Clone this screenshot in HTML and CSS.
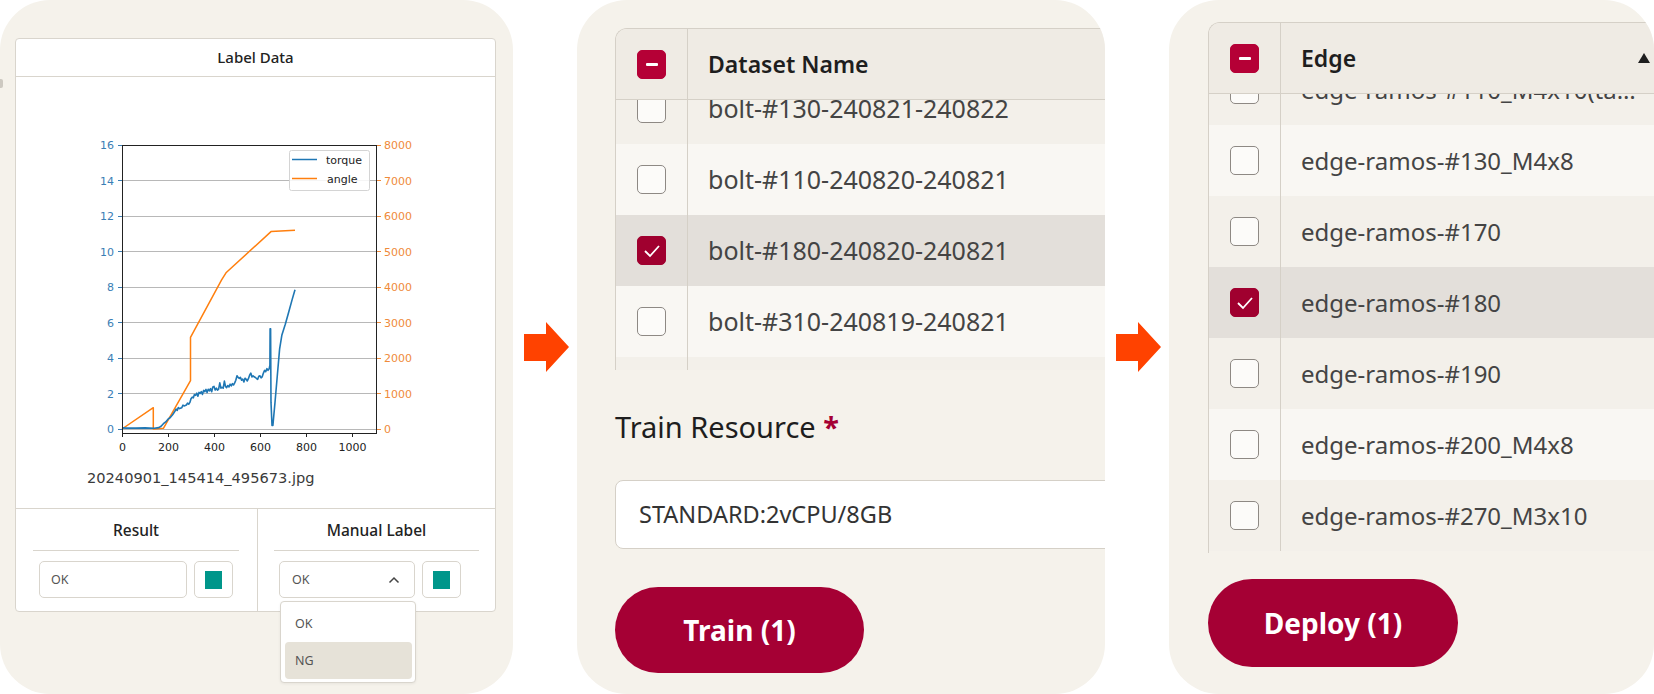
FILE: index.html
```html
<!DOCTYPE html>
<html>
<head>
<meta charset="utf-8">
<title>Label, train and deploy</title>
<link rel="stylesheet" href="styles.css">
</head>
<body>
<div class="screen">

  <section class="panel panel-label">
    <span class="edge-nub"></span>
    <div class="card">
      <div class="card-head">Label Data</div>
      <div class="card-body">
        <svg class="chart" width="479" height="388" viewBox="16 77 479 388">
          <g stroke="#b8b8b8" stroke-width="1">
            <line x1="122" y1="180.5" x2="376" y2="180.5"/>
            <line x1="122" y1="216.5" x2="376" y2="216.5"/>
            <line x1="122" y1="251.5" x2="376" y2="251.5"/>
            <line x1="122" y1="287.5" x2="376" y2="287.5"/>
            <line x1="122" y1="322.5" x2="376" y2="322.5"/>
            <line x1="122" y1="358.5" x2="376" y2="358.5"/>
            <line x1="122" y1="393.5" x2="376" y2="393.5"/>
            <line x1="122" y1="429.5" x2="376" y2="429.5"/>
          </g>
          <g stroke="#3a7eb5" stroke-width="1">
            <line x1="118" y1="145.5" x2="122" y2="145.5"/>
            <line x1="118" y1="180.5" x2="122" y2="180.5"/>
            <line x1="118" y1="216.5" x2="122" y2="216.5"/>
            <line x1="118" y1="251.5" x2="122" y2="251.5"/>
            <line x1="118" y1="287.5" x2="122" y2="287.5"/>
            <line x1="118" y1="322.5" x2="122" y2="322.5"/>
            <line x1="118" y1="358.5" x2="122" y2="358.5"/>
            <line x1="118" y1="393.5" x2="122" y2="393.5"/>
            <line x1="118" y1="429.5" x2="122" y2="429.5"/>
          </g>
          <g stroke="#ef8a3a" stroke-width="1">
            <line x1="377" y1="145.5" x2="381" y2="145.5"/>
            <line x1="377" y1="180.5" x2="381" y2="180.5"/>
            <line x1="377" y1="216.5" x2="381" y2="216.5"/>
            <line x1="377" y1="251.5" x2="381" y2="251.5"/>
            <line x1="377" y1="287.5" x2="381" y2="287.5"/>
            <line x1="377" y1="322.5" x2="381" y2="322.5"/>
            <line x1="377" y1="358.5" x2="381" y2="358.5"/>
            <line x1="377" y1="393.5" x2="381" y2="393.5"/>
            <line x1="377" y1="429.5" x2="381" y2="429.5"/>
          </g>
          <g stroke="#222" stroke-width="1">
            <line x1="122.5" y1="433" x2="122.5" y2="437"/>
            <line x1="168.5" y1="433" x2="168.5" y2="437"/>
            <line x1="214.5" y1="433" x2="214.5" y2="437"/>
            <line x1="260.5" y1="433" x2="260.5" y2="437"/>
            <line x1="306.5" y1="433" x2="306.5" y2="437"/>
            <line x1="352.5" y1="433" x2="352.5" y2="437"/>
          </g>
          <polyline fill="none" stroke="#ff7f0e" stroke-width="1.5" stroke-linejoin="round"
            points="122,429 153.3,407.7 153.3,429 163.4,428.3 190.5,380.7 190.5,337.4 221.6,279.9 226,272.8 271,231.6 295,230.2"/>
          <polyline fill="none" stroke="#1f77b4" stroke-width="1.6" stroke-linejoin="round"
            points="122,427.9 126.6,428.1 135.8,428.1 145,427.9 154.2,428.3 158.8,427.6 161.1,426.3 163.4,423.7 165.7,421.9 168,419.2 170.3,417.5 172.6,414.8 174.9,411.3 176,409 177.2,410.4 178.3,407.6 179.5,408.6 181.8,407.7 183,405.2 184.1,405.9 186.4,405 187.5,403.1 188.7,404.2 189.9,402.4 191,398.8 192.2,397.1 193.3,397.9 194.4,394.6 195.6,395.3 196.8,393.2 197.9,396.2 199,392.4 200.2,393.5 201.3,391.6 202.5,394.4 203.6,390.4 204.8,391.7 206,389.4 207.1,392.6 208.2,389.3 209.4,390.8 210.5,388.6 211.7,391.7 212.8,386.9 214,386.4 215.2,390 216.4,388.2 217.5,390.2 218.6,389.1 219.8,382.9 220.9,388.2 222,387.4 223.2,388.2 224.4,381.1 225.5,386.4 226.6,387.6 227.8,385.5 229,386.9 230.1,384.2 231.3,385.8 232.4,383.7 233.5,385 234.7,382.9 235.8,380.2 237,375.8 238.1,377.3 239.3,378.4 240.4,377.4 241.6,380.2 242.7,379 243.9,382 245,378.2 246.2,379.3 247.3,381 248.5,378.4 249.6,375.2 250.8,373.1 252,376.9 253.1,375.8 254.2,376.8 255.4,377.5 256.5,378.5 257.7,379.3 258.8,376.3 260,375.8 261.1,377.9 262.3,376.6 263.4,373.1 264.6,370.4 265.7,371.6 266.9,368.7 268,370.3 269.2,368.7 269.9,365.1 270.1,328.7 270.6,328.7 271,402.4 272,425.5 272.9,425.5 275,402.4 277.3,375.8 279.6,349.1 281.9,334.9 285.3,324.3 288.8,311.8 292.2,299.4 295,289.7"/>
          <rect x="122.5" y="145.5" width="254" height="288" fill="none" stroke="#222" stroke-width="1"/>
          <g class="tick-left">
            <text x="114" y="149">16</text>
            <text x="114" y="184.5">14</text>
            <text x="114" y="220">12</text>
            <text x="114" y="255.5">10</text>
            <text x="114" y="291">8</text>
            <text x="114" y="326.5">6</text>
            <text x="114" y="362">4</text>
            <text x="114" y="397.5">2</text>
            <text x="114" y="433">0</text>
          </g>
          <g class="tick-right">
            <text x="384" y="149">8000</text>
            <text x="384" y="184.5">7000</text>
            <text x="384" y="220">6000</text>
            <text x="384" y="255.5">5000</text>
            <text x="384" y="291">4000</text>
            <text x="384" y="326.5">3000</text>
            <text x="384" y="362">2000</text>
            <text x="384" y="397.5">1000</text>
            <text x="384" y="433">0</text>
          </g>
          <g class="tick-bottom">
            <text x="122.5" y="451">0</text>
            <text x="168.5" y="451">200</text>
            <text x="214.5" y="451">400</text>
            <text x="260.5" y="451">600</text>
            <text x="306.5" y="451">800</text>
            <text x="352.5" y="451">1000</text>
          </g>
          <rect x="289.5" y="150.5" width="80" height="40" rx="2" fill="#fff" fill-opacity="0.85" stroke="#d4d4d4"/>
          <line x1="292" y1="159.5" x2="317" y2="159.5" stroke="#1f77b4" stroke-width="1.5"/>
          <line x1="292" y1="178.5" x2="317" y2="178.5" stroke="#ff7f0e" stroke-width="1.5"/>
          <text class="legend-text" x="326" y="163.5">torque</text>
          <text class="legend-text" x="327" y="182.5">angle</text>
        </svg>
        <div class="filename">20240901_145414_495673.jpg</div>
      </div>
      <div class="card-foot">
        <div class="foot-col">
          <div class="foot-title">Result</div>
          <div class="foot-row">
            <div class="field field-result">OK</div>
            <button class="swatch"><span></span></button>
          </div>
        </div>
        <div class="foot-col foot-col-manual">
          <div class="foot-title">Manual Label</div>
          <div class="foot-row">
            <div class="field field-select">
              OK
              <svg class="chevron" width="12" height="8" viewBox="0 0 12 8"><polyline points="1.5,6.5 6,2 10.5,6.5" fill="none" stroke="#444" stroke-width="1.5"/></svg>
              <ul class="menu">
                <li>OK</li>
                <li class="menu-hot">NG</li>
              </ul>
            </div>
            <button class="swatch"><span></span></button>
          </div>
        </div>
      </div>
    </div>
  </section>

  <div class="flow-arrow">
    <svg width="45" height="50" viewBox="0 0 45 50"><polygon points="0,12 22,12 22,0 45,25 22,50 22,39 0,39" fill="#ff4200"/></svg>
  </div>

  <section class="panel panel-train">
    <div class="grid grid-train">
      <div class="grid-head">
        <div class="cell-check"><span class="box box-part"></span></div>
        <div class="cell-name">Dataset Name</div>
      </div>
      <div class="grid-body">
        <div class="grid-rows rows-train">
          <div class="grid-row row-alt"><div class="cell-check"><span class="box"></span></div><div class="cell-name">bolt-#130-240821-240822</div></div>
          <div class="grid-row"><div class="cell-check"><span class="box"></span></div><div class="cell-name">bolt-#110-240820-240821</div></div>
          <div class="grid-row row-on"><div class="cell-check"><span class="box box-on"><svg width="18" height="14" viewBox="0 0 18 14"><polyline points="2,7 7,12 16,2" fill="none" stroke="#fff" stroke-width="1.8"/></svg></span></div><div class="cell-name">bolt-#180-240820-240821</div></div>
          <div class="grid-row"><div class="cell-check"><span class="box"></span></div><div class="cell-name">bolt-#310-240819-240821</div></div>
          <div class="grid-row row-alt"><div class="cell-check"></div><div class="cell-name"></div></div>
        </div>
      </div>
    </div>
    <div class="field-label">Train Resource <span class="req">*</span></div>
    <div class="resource">STANDARD:2vCPU/8GB</div>
    <button class="pill pill-train">Train (1)</button>
  </section>

  <div class="flow-arrow">
    <svg width="45" height="50" viewBox="0 0 45 50"><polygon points="0,12 22,12 22,0 45,25 22,50 22,39 0,39" fill="#ff4200"/></svg>
  </div>

  <section class="panel panel-deploy">
    <div class="grid grid-deploy">
      <div class="grid-head">
        <div class="cell-check"><span class="box box-part"></span></div>
        <div class="cell-name">Edge <svg class="sort" width="12" height="10" viewBox="0 0 12 10"><polygon points="6,0 12,10 0,10" fill="#1e1e1e"/></svg></div>
      </div>
      <div class="grid-body">
        <div class="grid-rows rows-deploy">
          <div class="grid-row row-alt"><div class="cell-check"><span class="box"></span></div><div class="cell-name">edge-ramos-#110_M4x10(tapping)</div></div>
          <div class="grid-row"><div class="cell-check"><span class="box"></span></div><div class="cell-name">edge-ramos-#130_M4x8</div></div>
          <div class="grid-row row-alt"><div class="cell-check"><span class="box"></span></div><div class="cell-name">edge-ramos-#170</div></div>
          <div class="grid-row row-on"><div class="cell-check"><span class="box box-on"><svg width="18" height="14" viewBox="0 0 18 14"><polyline points="2,7 7,12 16,2" fill="none" stroke="#fff" stroke-width="1.8"/></svg></span></div><div class="cell-name">edge-ramos-#180</div></div>
          <div class="grid-row row-alt"><div class="cell-check"><span class="box"></span></div><div class="cell-name">edge-ramos-#190</div></div>
          <div class="grid-row"><div class="cell-check"><span class="box"></span></div><div class="cell-name">edge-ramos-#200_M4x8</div></div>
          <div class="grid-row row-alt"><div class="cell-check"><span class="box"></span></div><div class="cell-name">edge-ramos-#270_M3x10</div></div>
        </div>
      </div>
    </div>
    <button class="pill pill-deploy">Deploy (1)</button>
  </section>

</div>
</body>
</html>
```

FILE: styles.css
```css
body
{
margin: 0;
background-color: #fff;
font-family: "Noto Sans", "Open Sans", sans-serif;
color: #333;
}

.screen
{
display: flex;
width: 1654px;
height: 694px;
}

.panel
{
box-sizing: border-box;
height: 694px;
background-color: #F5F2EB;
border-radius: 50px;
position: relative;
}

.flow-arrow
{
box-sizing: border-box;
width: 64px;
padding-left: 11px;
display: flex;
align-items: center;
}

/* panel 1 : label data */
.panel-label
{
width: 513px;
padding: 38px 17px 0 15px;
}

.edge-nub
{
position: absolute;
left: 0;
top: 79px;
width: 3px;
height: 9px;
border-radius: 0 2px 2px 0;
background-color: #cdc9c1;
}

.card
{
background-color: #fff;
border: 1px solid #D9D5CD;
border-radius: 4px;
}

.card-head
{
height: 37px;
line-height: 37px;
text-align: center;
font-size: 15px;
font-weight: 500;
color: #222;
border-bottom: 1px solid #D9D5CD;
}

.card-body
{
height: 431px;
}

.chart
{
display: block;
font-family: "DejaVu Sans", sans-serif;
font-size: 11px;
}
.tick-left text {fill: #3a7eb5; text-anchor: end;}
.tick-right text {fill: #ef8a3a;}
.tick-bottom text {fill: #222; text-anchor: middle;}
.legend-text {fill: #222;}

.filename
{
padding-left: 71px;
line-height: 26px;
font-family: "DejaVu Sans", sans-serif;
font-size: 14.6px;
color: #3a3a3a;
}

.card-foot
{
display: flex;
border-top: 1px solid #D9D5CD;
height: 102px;
}

.foot-col
{
width: 241px;
padding: 0 18px 0 17px;
box-sizing: border-box;
}
.foot-col-manual
{
flex: 1;
border-left: 1px solid #D9D5CD;
padding: 0 16px;
}

.foot-title
{
height: 41px;
line-height: 42px;
text-align: center;
font-size: 15.5px;
font-weight: 500;
color: #222;
border-bottom: 1px solid #D9D5CD;
}

.foot-row
{
display: flex;
gap: 7px;
margin-top: 10px;
padding: 0 6px;
}
.foot-col-manual .foot-row {padding: 0 18px 0 5px;}

.field
{
box-sizing: border-box;
height: 37px;
line-height: 35px;
border: 1px solid #D9D5CD;
border-radius: 5px;
font-size: 12.5px;
color: #555;
padding-left: 11px;
}
.field-result {flex: 1;}
.field-select
{
width: 136px;
position: relative;
padding-left: 12px;
}

.chevron
{
position: absolute;
right: 14px;
top: 14px;
}

.swatch
{
box-sizing: border-box;
width: 39px;
height: 37px;
padding: 0;
background-color: #fff;
border: 1px solid #D9D5CD;
border-radius: 5px;
display: flex;
align-items: center;
justify-content: center;
}
.swatch span
{
width: 17px;
height: 18px;
background-color: #00968A;
}

.menu
{
position: absolute;
left: 0;
top: 39px;
width: 136px;
box-sizing: border-box;
margin: 0;
padding: 3px 3px 3px 4px;
list-style: none;
background-color: #fff;
border: 1px solid #D9D5CD;
border-radius: 4px;
box-shadow: 0 1px 3px rgba(0,0,0,0.06);
}
.menu li
{
height: 37px;
line-height: 37px;
padding-left: 10px;
border-radius: 4px;
color: #555;
}
.menu li.menu-hot {background-color: #E6E2D8;}

/* panels 2 and 3 : tables */
.panel-train
{
width: 528px;
padding: 28px 0 0 38px;
overflow: hidden;
}
.panel-deploy
{
width: 485px;
padding: 22px 0 0 39px;
overflow: hidden;
}

.grid
{
border-top: 1px solid #D5D0C7;
border-left: 1px solid #D5D0C7;
border-top-left-radius: 12px;
overflow: hidden;
}
.grid-train {width: 620px;}
.grid-deploy {width: 445px;}

.grid-head
{
display: flex;
height: 70px;
background-color: #EFEBE4;
border-bottom: 1px solid #D5D0C7;
font-size: 23px;
font-weight: 600;
color: #1e1e1e;
}

.grid-body {overflow: hidden;}
.grid-train .grid-body {height: 270px;}
.grid-deploy .grid-body {height: 459px;}

.rows-train {margin-top: -27px;}
.rows-deploy {margin-top: -40px;}

.grid-row
{
display: flex;
height: 71px;
background-color: #F9F7F3;
color: #444;
}
.rows-train .grid-row {font-size: 25px;}
.rows-deploy .grid-row {font-size: 24px;}
.grid-row.row-alt {background-color: #F3F0EA;}
.grid-row.row-on {background-color: #E3DFDA;}

.cell-check
{
width: 71px;
flex: none;
border-right: 1px solid #D5D0C7;
display: flex;
align-items: center;
justify-content: center;
}

.cell-name
{
flex: 1;
min-width: 0;
display: flex;
align-items: center;
justify-content: space-between;
padding: 0 4px 0 20px;
white-space: nowrap;
overflow: hidden;
text-overflow: ellipsis;
}
.grid-row .cell-name {display: block; line-height: 71px;}

.sort {flex: none;}

.box
{
box-sizing: border-box;
width: 29px;
height: 29px;
border: 1.5px solid #8E8984;
border-radius: 5px;
background-color: #FCFBF9;
display: flex;
align-items: center;
justify-content: center;
}
.box-on
{
background-color: #A0002F;
border-color: #A0002F;
}
.box-part
{
background-color: #B50036;
border-color: #B50036;
}
.box-part::after
{
content: "";
width: 12px;
height: 3px;
border-radius: 1px;
background-color: #fff;
}

.field-label
{
margin-top: 37px;
line-height: 40px;
font-size: 29px;
color: #1e1e1e;
}
.req
{
color: #A50034;
font-weight: bold;
}

.resource
{
box-sizing: border-box;
width: 540px;
height: 69px;
margin-top: 33px;
padding-left: 23px;
line-height: 67px;
background-color: #fff;
border: 1px solid #D5D0C7;
border-radius: 8px;
font-size: 23.5px;
color: #333;
}

.pill
{
display: block;
border: none;
padding: 0;
border-radius: 44px;
background-color: #A50034;
color: #fff;
font-family: "Noto Sans", "Open Sans", sans-serif;
font-weight: bold;
font-size: 28px;
}
.pill-train
{
width: 249px;
height: 86px;
margin-top: 38px;
}
.pill-deploy
{
width: 250px;
height: 88px;
margin-top: 26px;
}
```
